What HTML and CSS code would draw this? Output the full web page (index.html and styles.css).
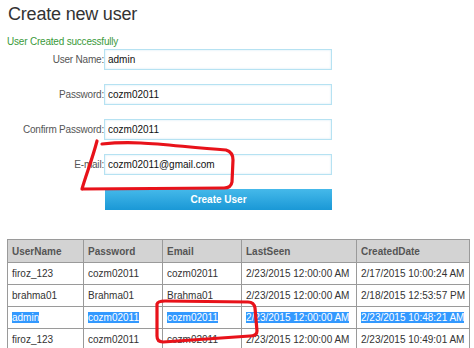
FILE: index.html
```html
<!doctype html>
<html>
    <head>
        <meta charset="utf-8">
        <title>Create new user</title>
        <link rel="stylesheet" href="styles.css">
    </head>
    <body>
        <h2 class="title">Create new user</h2>
        <div class="message">User Created successfully</div>

        <div class="form-layout">
            <label>User Name:</label><input type="text" value="admin">
            <label>Password:</label><input type="text" value="cozm02011">
            <label>Confirm Password:</label><input type="text" value="cozm02011">
            <label>E-mail:</label><input type="text" value="cozm02011@gmail.com">
            <span></span><button type="button" class="button-create">Create User</button>
        </div>

        <table class="users">
            <colgroup>
                <col style="width:76px"><col style="width:79px"><col style="width:79px"><col style="width:115px"><col>
            </colgroup>
            <tr><th>UserName</th><th>Password</th><th>Email</th><th>LastSeen</th><th>CreatedDate</th></tr>
            <tr><td>firoz_123</td><td>cozm02011</td><td>cozm02011</td><td>2/23/2015 12:00:00 AM</td><td>2/17/2015 10:00:24 AM</td></tr>
            <tr><td>brahma01</td><td>Brahma01</td><td>Brahma01</td><td>2/23/2015 12:00:00 AM</td><td>2/18/2015 12:53:57 PM</td></tr>
            <tr class="selected"><td><span>admin</span></td><td><span>cozm02011</span></td><td><span>cozm02011</span></td><td><span>2/23/2015 12:00:00 AM</span></td><td><span>2/23/2015 10:48:21 AM</span></td></tr>
            <tr><td>firoz_123</td><td>cozm02011</td><td>cozm02011</td><td>2/23/2015 12:00:00 AM</td><td>2/23/2015 10:49:01 AM</td></tr>
        </table>

        <!-- hand drawn markings -->
        <svg class="marks" width="474" height="348" viewBox="0 0 474 348">
            <path d="M102 144 C140 140, 170 146, 226 150 Q233 152, 233 160 L232 182 Q231 188, 224 188 L82 189 M97 141 C92 160, 86 175, 82 189" />
            <path d="M157 304 Q158 301, 165 301 L248 302 Q254 302, 255 308 L257 331 Q257 336, 250 336 L163 342 Q157 342, 157 336 Z" />
        </svg>
    </body>
</html>
```

FILE: styles.css
```css
html {
    padding: 0;
    margin: 0;
}
body {
    font-family: "Liberation Sans", Arial, sans-serif;
    color: #333;
    background: #fff;
    margin: 0;
    padding: 0 8px;
    width: 474px;
    height: 348px;
    box-sizing: border-box;
    overflow: hidden;
    position: relative;
}

.title {
    font-size: 18px;
    font-weight: normal;
    line-height: 24px;
    margin: 2px 0 0 0;
    color: #333;
    letter-spacing: -0.2px;
}
.message {
    font-size: 10px;
    line-height: 14px;
    margin-top: 9px;
    margin-left: -1px;
    letter-spacing: -0.2px;
    color: #3a9a3a;
}

.form-layout {
    display: grid;
    grid-template-columns: 96px 228px;
    grid-auto-rows: 21px;
    row-gap: 14px;
    align-items: center;
}
.form-layout label {
    text-align: right;
    font-size: 10px;
    letter-spacing: -0.2px;
    color: #555;
}
.form-layout input {
    height: 21px;
    box-sizing: border-box;
    margin: 0;
    padding: 0 3px;
    font-family: inherit;
    font-size: 10px;
    color: #111;
    border: solid 1px #b6e2f2;
    box-shadow: inset 0 0 2px rgba(150, 210, 235, .5);
    outline: none;
}
.button-create {
    height: 21px;
    margin: 0 0 0 1px;
    padding: 0;
    width: 227px;
    border: none;
    font-family: inherit;
    font-size: 10px;
    font-weight: bold;
    color: #fff;
    background: #1fa0dc;
    background-image: linear-gradient(180deg, #45b9ea, #1a98d6);
}

table.users {
    margin-top: 29px;
    margin-left: -1px;
    width: 463px;
    table-layout: fixed;
    border-collapse: collapse;
    font-size: 10px;
}
table.users th, table.users td {
    border: solid 1px #9a9a9a;
    text-align: left;
    padding: 0 4px;
    height: 21px;
    white-space: nowrap;
    overflow: hidden;
}
table.users th {
    height: 22px;
    background: #d3d3d3;
    color: #555;
    font-weight: bold;
}
table.users td {
    color: #333;
}
tr.selected span {
    background: #3399ff;
    color: #fff;
}

.marks {
    position: absolute;
    left: 0;
    top: 0;
    pointer-events: none;
}
.marks path {
    fill: none;
    stroke: #e8121a;
    stroke-width: 3.2;
    stroke-linecap: round;
    stroke-linejoin: round;
}
```
